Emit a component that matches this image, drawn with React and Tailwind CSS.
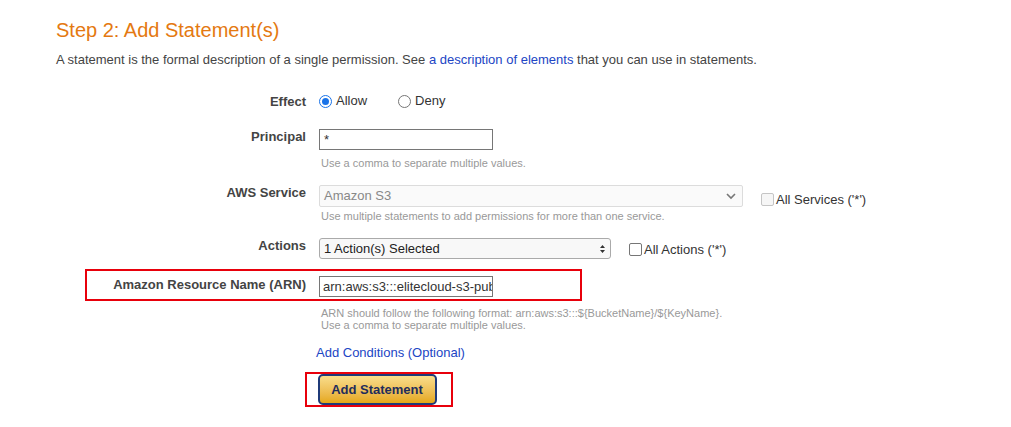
import React from 'react';

const font = { fontFamily: '"Liberation Sans", Arial, sans-serif' };

const Label = ({ children, className = '' }) => (
  <div className={`w-[250px] shrink-0 text-right text-[13px] font-bold leading-[15px] text-[#444] ${className}`}>
    {children}
  </div>
);

const Help = ({ children, className = '' }) => (
  <div className={`ml-[265px] text-[11px] leading-[12px] text-[#999] ${className}`}>{children}</div>
);

const Radio = ({ checked }) =>
  checked ? (
    <span className="flex h-[13px] w-[13px] items-center justify-center rounded-full border border-[#1a73e8] bg-white">
      <span className="h-[7px] w-[7px] rounded-full bg-[#1a73e8]" />
    </span>
  ) : (
    <span className="block h-[13px] w-[13px] rounded-full border border-[#767676] bg-white" />
  );

const Checkbox = ({ disabled }) => (
  <span
    className={`inline-block h-[13px] w-[13px] rounded-[2px] border ${
      disabled ? 'border-[#c5c5c5] bg-[#f6f6f6]' : 'border-[#767676] bg-white'
    }`}
  />
);

const App = () => {
  return (
    <div className="h-[427px] w-[1011px] bg-white pl-[56px] pt-[17px]" style={font}>
      <h2 className="text-[20px] leading-[26px] text-[#e47911]">Step 2: Add Statement(s)</h2>
      <p className="mt-[9px] text-[13px] leading-[15px] text-[#444]">
        A statement is the formal description of a single permission. See{' '}
        <span className="text-[#2145c4]">a description of elements</span> that you can use in statements.
      </p>

      {/* Effect */}
      <div className="mt-[24px] flex h-[20px] items-center gap-[13px]">
        <Label>Effect</Label>
        <div className="flex items-center text-[13px] text-[#333]">
          <Radio checked />
          <span className="ml-[4px]">Allow</span>
          <span className="ml-[31px]">
            <Radio />
          </span>
          <span className="ml-[4px]">Deny</span>
        </div>
      </div>

      {/* Principal */}
      <div className="mt-[18px] flex items-start gap-[13px]">
        <Label>Principal</Label>
        <div className="flex h-[21px] w-[174px] items-center border border-[#767676] px-[4px] text-[13px] text-[#333]">
          *
        </div>
      </div>
      <Help className="mt-[7px]">Use a comma to separate multiple values.</Help>

      {/* AWS Service */}
      <div className="mt-[16px] flex items-start">
        <div className="flex items-start gap-[13px]">
          <Label>AWS Service</Label>
          <div className="flex h-[22px] w-[424px] items-center justify-between rounded-[2px] border border-[#dcdcdc] bg-[#fafafa] pl-[4px] pr-[6px] text-[13px] text-[#888]">
            <span>Amazon S3</span>
            <svg width="10" height="7" viewBox="0 0 10 7" fill="none">
              <path d="M1 1l4 4 4-4" stroke="#777" strokeWidth="1.6" />
            </svg>
          </div>
        </div>
        <div className="ml-[18px] mt-[7px] flex items-center gap-[2px] text-[13px] leading-[15px] text-[#333]">
          <Checkbox disabled />
          <span>All Services ('*')</span>
        </div>
      </div>
      <Help className="mt-[3px]">Use multiple statements to add permissions for more than one service.</Help>

      {/* Actions */}
      <div className="mt-[16px] flex items-start">
        <div className="flex items-start gap-[13px]">
          <Label>Actions</Label>
          <div className="flex h-[21px] w-[292px] items-center justify-between rounded-[3px] border border-[#aaa] bg-[#f8f8f8] pl-[4px] pr-[4px] text-[13px] text-[#222]">
            <span>1 Action(s) Selected</span>
            <svg width="7" height="10" viewBox="0 0 7 10">
              <path d="M3.5 1L6 4H1z M3.5 9L6 6H1z" fill="#333" />
            </svg>
          </div>
        </div>
        <div className="ml-[18px] mt-[4px] flex items-center gap-[2px] text-[13px] leading-[15px] text-[#333]">
          <Checkbox />
          <span>All Actions ('*')</span>
        </div>
      </div>

      {/* ARN */}
      <div className="ml-[29px] mt-[10px] flex h-[32px] w-[497px] items-start border-2 border-[#e8000b] pt-[5px]">
        <div className="w-[219px] shrink-0 pt-[1px] text-right text-[13px] font-bold leading-[15px] text-[#444]">
          Amazon Resource Name (ARN)
        </div>
        <div className="ml-[13px] flex h-[21px] w-[174px] items-center overflow-hidden whitespace-nowrap border border-[#767676] px-[3px] text-[13px] text-[#333]">
          arn:aws:s3:::elitecloud-s3-public-bucket/*
        </div>
      </div>
      <Help className="mt-[6px]">
        ARN should follow the following format: arn:aws:s3:::${'{'}BucketName{'}'}/${'{'}KeyName{'}'}.
        <br />
        Use a comma to separate multiple values.
      </Help>

      <div className="ml-[260px] mt-[14px] text-[13px] leading-[15px] text-[#2145c4]">Add Conditions (Optional)</div>

      <div className="ml-[249px] mt-[12px] flex h-[35px] w-[148px] items-center justify-center border-2 border-[#e8000b]">
        <button className="h-[31px] w-[119px] -translate-x-[2px] rounded-[5px] border-2 border-[#1f3a78] bg-gradient-to-b from-[#f9dd8a] to-[#e5a812] text-[13px] font-bold text-[#1f2d5c]">
          Add Statement
        </button>
      </div>
    </div>
  );
};

export default App;
